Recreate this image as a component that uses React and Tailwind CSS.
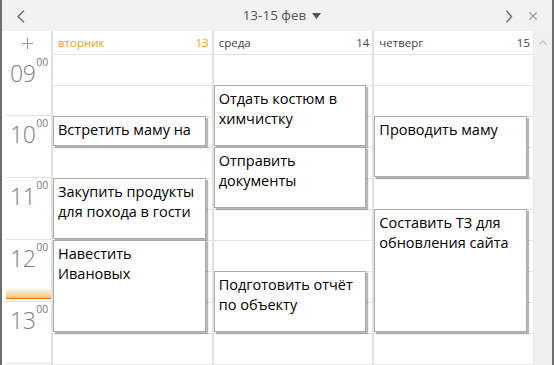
import React from "react";

const SLOT = 31;

const days = [
  {
    name: "вторник",
    num: "13",
    today: true,
    events: [
      { s: 2, k: 1, t: "Встретить маму на" },
      { s: 4, k: 2, t: "Закупить продукты для похода в гости" },
      { s: 6, k: 3, t: "Навестить Ивановых" },
    ],
  },
  {
    name: "среда",
    num: "14",
    events: [
      { s: 1, k: 2, t: "Отдать костюм в химчистку" },
      { s: 3, k: 2, t: "Отправить документы" },
      { s: 7, k: 2, t: "Подготовить отчёт по объекту" },
    ],
  },
  {
    name: "четверг",
    num: "15",
    events: [
      { s: 2, k: 2, t: "Проводить маму" },
      { s: 5, k: 4, t: "Составить ТЗ для обновления сайта" },
    ],
  },
];

const hours = ["09", "10", "11", "12", "13"];
const font = { fontFamily: '"Open Sans", "Noto Sans", sans-serif' };

function DayColumn({ day }) {
  return (
    <div className="flex flex-1 flex-col border-l-2 border-[#e2e2e2] min-w-0">
      <div className="flex h-[24px] items-center justify-between border-b border-[#e2e2e2] pl-[5px] pr-[3px] text-[11.5px] bg-white">
        <span className={day.today ? "text-[#f4a024]" : "text-[#444]"}>{day.name}</span>
        <span className={day.today ? "text-[#f4a024]" : "text-[#444]"}>{day.num}</span>
      </div>
      <div className="relative flex-1">
        <div className="flex flex-col">
          {Array.from({ length: 10 }).map((_, i) => (
            <div key={i} className="h-[31px] border-b border-[#e6e6e6]" />
          ))}
        </div>
        {day.events.map((e, i) => (
          <div
            key={i}
            className="absolute left-0 right-[6px] overflow-hidden border border-[#a9a9a9] bg-white px-[4px] pt-[3px] text-[14.5px] leading-[20px] text-black shadow-[2px_2px_1px_rgba(0,0,0,0.28)]"
            style={{ top: e.s * SLOT - 1, height: e.k * SLOT - 1 }}
          >
            {e.t}
          </div>
        ))}
      </div>
    </div>
  );
}

export default function App() {
  return (
    <div
      className="flex h-[365px] w-[554px] flex-col overflow-hidden border-x-2 border-[#6e6e6e] bg-white"
      style={font}
    >
      <div className="relative flex h-[31px] shrink-0 items-center justify-center bg-[#f2f2f2]">
        <svg className="absolute left-[14px] top-[10px]" width="10" height="13" viewBox="0 0 10 13">
          <path d="M8 0.8 L2 6.5 L8 12.2" fill="none" stroke="#666" strokeWidth="1.3" />
        </svg>
        <div className="flex items-center gap-[6px] pl-[10px] text-[13.5px] text-[#555]">
          <span>13-15 фев</span>
          <svg width="9" height="6" viewBox="0 0 9 6">
            <path d="M0 0 H9 L4.5 6 Z" fill="#555" />
          </svg>
        </div>
        <svg className="absolute left-[503px] top-[10px]" width="8" height="13" viewBox="0 0 8 13">
          <path d="M1.5 0.8 L6.5 6.5 L1.5 12.2" fill="none" stroke="#666" strokeWidth="1.3" />
        </svg>
        <svg className="absolute left-[527px] top-[12px]" width="8" height="8" viewBox="0 0 8 8">
          <path d="M0.5 0.5 L7.5 7.5 M7.5 0.5 L0.5 7.5" fill="none" stroke="#9a9a9a" strokeWidth="1.1" />
        </svg>
      </div>
      <div className="flex flex-1">
        <div className="flex w-[49px] shrink-0 flex-col">
          <div className="flex h-[24px] items-center justify-center pl-[2px]">
            <svg width="11" height="11" viewBox="0 0 11 11">
              <path d="M5.5 0 V11 M0 5.5 H11" stroke="#9a9a9a" strokeWidth="1" />
            </svg>
          </div>
          <div className="flex flex-col pl-[4px]">
            {hours.map((h, i) => (
              <div
                key={h}
                className={`relative flex items-start border-b border-[#e2e2e2] pl-[4px] text-[#7d7d7d] ${i === 0 ? "h-[61px]" : "h-[62px]"}`}
              >
                <span className="pt-[7px] text-[23px] font-light leading-none tracking-[-0.5px]">{h}</span>
                <span className="pl-[1px] pt-[2px] text-[10.5px] leading-none">00</span>
                {h === "12" && (
                  <div className="absolute bottom-[2px] left-0 right-0 h-[10px] border-b border-[#e07800] bg-gradient-to-b from-[#fdf6e8] to-[#f3c37a]" />
                )}
              </div>
            ))}
          </div>
        </div>
        {days.map((d) => (
          <DayColumn key={d.name} day={d} />
        ))}
        <div className="relative w-[19px] shrink-0 border-l border-[#e8e8e8] bg-[#f0f0f0]">
          <svg className="absolute left-[5px] top-[9px]" width="8" height="5" viewBox="0 0 8 5">
            <path d="M0.5 4.5 L4 1 L7.5 4.5" fill="none" stroke="#bdbdbd" strokeWidth="1.1" />
          </svg>
        </div>
      </div>
    </div>
  );
}
